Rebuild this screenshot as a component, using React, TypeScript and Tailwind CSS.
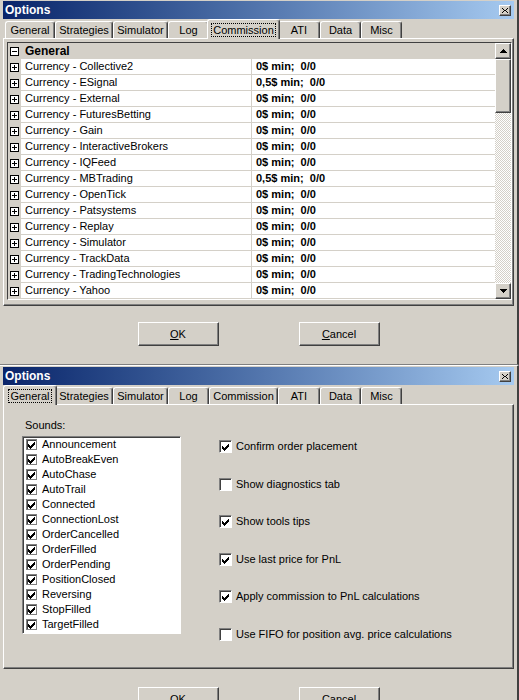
import React from 'react';

const raised =
  'bg-[#D4D0C8] border-t border-l border-t-white border-l-white border-r border-b border-r-[#404040] border-b-[#404040] shadow-[inset_-1px_-1px_#808080]';
const sunken =
  'border-t border-l border-t-[#808080] border-l-[#808080] border-r border-b border-r-white border-b-white shadow-[inset_1px_1px_#404040]';

const TABS = [
  { label: 'General', w: 'w-[50px]', ws: 'w-[54px]' },
  { label: 'Strategies', w: 'w-[58px]', ws: 'w-[62px]' },
  { label: 'Simulator', w: 'w-[55px]', ws: 'w-[59px]' },
  { label: 'Log', w: 'w-[41px]', ws: 'w-[45px]' },
  { label: 'Commission', w: 'w-[69px]', ws: 'w-[73px]' },
  { label: 'ATI', w: 'w-[42px]', ws: 'w-[46px]' },
  { label: 'Data', w: 'w-[41px]', ws: 'w-[45px]' },
  { label: 'Misc', w: 'w-[41px]', ws: 'w-[45px]' },
];

const ROWS: [string, string][] = [
  ['Collective2', '0$ min;  0/0'],
  ['ESignal', '0,5$ min;  0/0'],
  ['External', '0$ min;  0/0'],
  ['FuturesBetting', '0$ min;  0/0'],
  ['Gain', '0$ min;  0/0'],
  ['InteractiveBrokers', '0$ min;  0/0'],
  ['IQFeed', '0$ min;  0/0'],
  ['MBTrading', '0,5$ min;  0/0'],
  ['OpenTick', '0$ min;  0/0'],
  ['Patsystems', '0$ min;  0/0'],
  ['Replay', '0$ min;  0/0'],
  ['Simulator', '0$ min;  0/0'],
  ['TrackData', '0$ min;  0/0'],
  ['TradingTechnologies', '0$ min;  0/0'],
  ['Yahoo', '0$ min;  0/0'],
];

const SOUNDS = [
  'Announcement',
  'AutoBreakEven',
  'AutoChase',
  'AutoTrail',
  'Connected',
  'ConnectionLost',
  'OrderCancelled',
  'OrderFilled',
  'OrderPending',
  'PositionClosed',
  'Reversing',
  'StopFilled',
  'TargetFilled',
];

const OPTIONS: [string, boolean][] = [
  ['Confirm order placement', true],
  ['Show diagnostics tab', false],
  ['Show tools tips', true],
  ['Use last price for PnL', true],
  ['Apply commission to PnL calculations', true],
  ['Use FIFO for position avg. price calculations', false],
];

// classic 7x7 check mark, drawn as columns of 3 pixels
const CHECK_Y = [4, 5, 6, 5, 4, 3, 2];

const Check = () => (
  <svg width="9" height="9" viewBox="0 0 9 9" shapeRendering="crispEdges">
    {CHECK_Y.map((y, i) => (
      <rect key={i} x={i + 1} y={y} width="1" height="3" fill="#000" />
    ))}
  </svg>
);

const CheckBox = ({ checked }: { checked: boolean }) => (
  <div className={`w-[13px] h-[13px] bg-white shrink-0 ${sunken}`}>
    <div className="w-full h-full flex items-center justify-center">{checked && <Check />}</div>
  </div>
);

const ListCheck = () => (
  <div className="w-[11px] h-[11px] bg-white shrink-0 border border-[#808080] shadow-[inset_1px_1px_#404040] flex items-center justify-center">
    <Check />
  </div>
);

const ExpandBox = ({ open }: { open?: boolean }) => (
  <svg width="9" height="9" viewBox="0 0 9 9" shapeRendering="crispEdges">
    <rect x="0.5" y="0.5" width="8" height="8" fill="#fff" stroke="#000" />
    <rect x="2" y="4" width="5" height="1" fill="#000" />
    {!open && <rect x="4" y="2" width="1" height="5" fill="#000" />}
  </svg>
);

const Arrow = ({ up }: { up?: boolean }) => (
  <svg width="7" height="4" viewBox="0 0 7 4" shapeRendering="crispEdges">
    {up ? <path d="M3 0h1v1h1v1h1v1h1v1H0V3h1V2h1V1h1z" fill="#000" /> : <path d="M0 0h7v1H6v1H5v1H4v1H3V3H2V2H1V1H0z" fill="#000" />}
  </svg>
);

const TitleBar = () => (
  <div className="h-[18px] flex items-center justify-between bg-linear-to-r from-[#0A246A] to-[#A6CAF0] pl-[2px] pr-[3px]">
    <span className="text-white font-bold text-[12px] leading-none">Options</span>
    <div className={`w-[12px] h-[11px] flex items-center justify-center ${raised}`}>
      <svg width="6" height="5" viewBox="0 0 6 5" shapeRendering="crispEdges">
        <path d="M0 0h1v1h1v1h2V1h1V0h1v1H5v1H4v1h1v1h1v1H5V4H4V3H2v1H1v1H0V4h1V3h1V2H1V1H0z" fill="#000" />
      </svg>
    </div>
  </div>
);

const Tabs = ({ active }: { active: string }) => (
  <div className="h-[19px] flex items-end pl-[2px]">
    {TABS.map((t) => {
      const on = t.label === active;
      return (
        <div
          key={t.label}
          className={`${on ? `${t.ws} h-[20px] -mx-[2px] -mb-[1px] relative z-10` : `${t.w} h-[17px]`} bg-[#D4D0C8] rounded-t-[3px] border-t border-l border-white border-r border-r-[#404040] shadow-[inset_-1px_0_#808080] flex items-center justify-center`}
        >
          <span className={on ? 'border border-dotted border-black px-[1px] leading-[12px]' : 'leading-[12px]'}>{t.label}</span>
        </div>
      );
    })}
  </div>
);

const Buttons = ({ pt }: { pt: string }) => (
  <div className={`flex justify-center gap-[80px] ${pt} pb-[16px]`}>
    <div className={`w-[81px] h-[24px] flex items-center justify-center ${raised}`}>
      <span>
        <span className="underline">O</span>K
      </span>
    </div>
    <div className={`w-[81px] h-[24px] flex items-center justify-center ${raised}`}>
      <span>
        <span className="underline">C</span>ancel
      </span>
    </div>
  </div>
);

const Panel = ({ h, children }: { h: string; children: React.ReactNode }) => (
  <div className={`${h} bg-[#D4D0C8] border-t border-l border-white border-r border-b border-r-[#404040] border-b-[#404040] shadow-[inset_-1px_-1px_#808080]`}>
    {children}
  </div>
);

const Grid = () => (
  <div className="w-[505px] h-[258px] flex border-t border-l border-[#404040] border-r border-b border-r-white border-b-white overflow-hidden">
    <div className="flex-1 flex flex-col overflow-hidden">
      <div className="h-[16px] flex items-center bg-[#D4D0C8] shrink-0">
        <div className="w-[13px] flex justify-center">
          <ExpandBox open />
        </div>
        <span className="pl-[4px] font-bold text-[12px]">General</span>
      </div>
      {[...ROWS, ['', ''] as [string, string]].map(([name, value], i) => (
        <div key={i} className="h-[16px] flex shrink-0">
          <div className="w-[13px] bg-[#D4D0C8] flex items-center justify-center">{name && <ExpandBox />}</div>
          <div className="w-[231px] bg-white border-b border-r border-[#D4D0C8] pl-[4px] leading-[15px] whitespace-nowrap">
            {name && `Currency - ${name}`}
          </div>
          <div className="flex-1 bg-white border-b border-[#D4D0C8] pl-[4px] leading-[15px] font-bold whitespace-pre">{value}</div>
        </div>
      ))}
    </div>
    <div className="w-[16px] flex flex-col">
      <div className={`h-[16px] flex items-center justify-center ${raised}`}>
        <Arrow up />
      </div>
      <div className={`h-[54px] ${raised}`} />
      <div className="flex-1 bg-[repeating-conic-gradient(#ffffff_0_25%,#D4D0C8_0_50%)] bg-[length:2px_2px]" />
      <div className={`h-[16px] flex items-center justify-center ${raised}`}>
        <Arrow />
      </div>
    </div>
  </div>
);

export default function App() {
  return (
    <div className="w-[519px] h-[700px] overflow-hidden bg-[#D4D0C8] text-[11px] text-black font-['Liberation_Sans',Arial,sans-serif]">
      <div className="h-[365px] px-[3px] pt-[1px] pb-[3px] border-r-2 border-b border-r-[#404040] border-b-[#808080]">
        <TitleBar />
        <Tabs active="Commission" />
        <Panel h="h-[268px]">
          <div className="pt-[3px] pl-[3px]">
            <Grid />
          </div>
        </Panel>
        <Buttons pt="pt-[16px]" />
      </div>
      <div className="h-[335px] px-[3px] pt-[1px] border-r-2 border-r-[#404040] border-t border-t-white">
        <TitleBar />
        <Tabs active="General" />
        <Panel h="h-[265px]">
          <div className="flex pl-[18px]">
            <div className="flex flex-col pt-[14px]">
              <div className="ml-[3px] h-[13px] leading-[13px] mb-[4px]">Sounds:</div>
              <div className={`w-[159px] h-[198px] bg-white ${sunken}`}>
                {SOUNDS.map((s) => (
                  <div key={s} className="h-[15px] flex items-center gap-[5px] pl-[3px] leading-none">
                    <ListCheck />
                    <span>{s}</span>
                  </div>
                ))}
              </div>
            </div>
            <div className="flex flex-col ml-[38px] pt-[35px] gap-[24.6px]">
              {OPTIONS.map(([label, on]) => (
                <div key={label} className="h-[13px] flex items-center gap-[4px]">
                  <CheckBox checked={on} />
                  <span className="leading-none whitespace-nowrap">{label}</span>
                </div>
              ))}
            </div>
          </div>
        </Panel>
        <Buttons pt="pt-[18px]" />
      </div>
    </div>
  );
}
